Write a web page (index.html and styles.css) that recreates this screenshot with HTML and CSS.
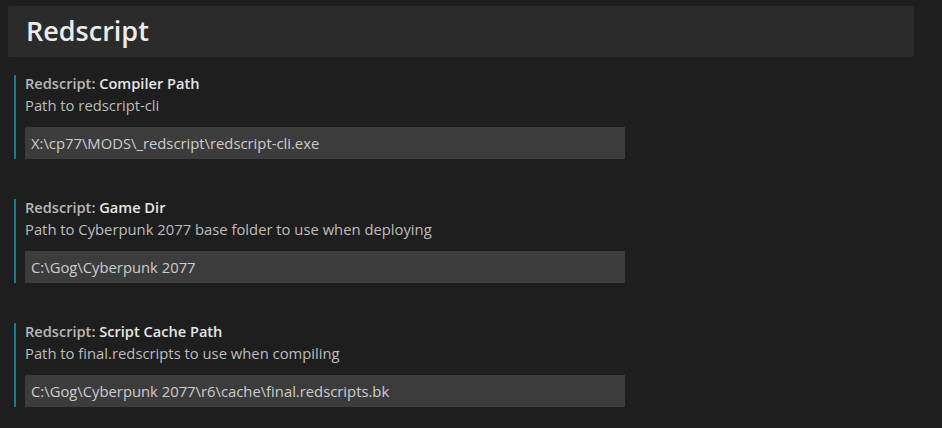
FILE: index.html
```html
<!DOCTYPE html>
<html>
<head>
<meta charset="utf-8">
<link rel="stylesheet" href="styles.css">
</head>
<body>
<div class="page">
  <div class="header"><h1 class="header-title">Redscript</h1></div>
  <div class="settings">
    <div class="item">
      <div class="item-title"><span class="cat">Redscript: </span><span class="name">Compiler Path</span></div>
      <div class="item-desc">Path to redscript-cli</div>
      <div class="input">X:\cp77\MODS\_redscript\redscript-cli.exe</div>
    </div>
    <div class="item">
      <div class="item-title"><span class="cat">Redscript: </span><span class="name">Game Dir</span></div>
      <div class="item-desc">Path to Cyberpunk 2077 base folder to use when deploying</div>
      <div class="input">C:\Gog\Cyberpunk 2077</div>
    </div>
    <div class="item">
      <div class="item-title"><span class="cat">Redscript: </span><span class="name">Script Cache Path</span></div>
      <div class="item-desc">Path to final.redscripts to use when compiling</div>
      <div class="input">C:\Gog\Cyberpunk 2077\r6\cache\final.redscripts.bk</div>
    </div>
  </div>
</div>
</body>
</html>
```
FILE: styles.css
```css
html, body {
  margin: 0;
  padding: 0;
  background: #1e1e1e;
  font-family: "Open Sans", "Noto Sans", sans-serif;
}
.page {
  padding: 6px 0 0 8px;
}
.header {
  width: 906px;
  height: 51px;
  background: #2b2b2b;
  border-radius: 2px;
  display: flex;
  align-items: center;
  box-sizing: border-box;
  padding: 0 0 3px 18px;
}
.header-title {
  margin: 0;
  font-size: 27px;
  font-weight: 600;
  color: #ececec;
}
.settings {
  padding: 18px 0 0 6px;
  display: flex;
  flex-direction: column;
  gap: 40px;
}
.item {
  border-left: 2px solid #1a7891;
  padding-left: 9px;
  height: 84px;
  box-sizing: border-box;
  display: flex;
  flex-direction: column;
}
.item-title {
  font-size: 14.6px;
  font-weight: 600;
  line-height: 16px;
}
.cat { color: #b8b8b8; }
.name { color: #e6e6e6; }
.item-desc {
  font-size: 14.8px;
  line-height: 20px;
  color: #bdbdbd;
  margin-top: 4px;
}
.input {
  margin-top: auto;
  width: 600px;
  height: 32px;
  background: #3c3c3c;
  color: #cccccc;
  font-size: 14.8px;
  line-height: 32px;
  padding-left: 6px;
  box-sizing: border-box;
}
```
